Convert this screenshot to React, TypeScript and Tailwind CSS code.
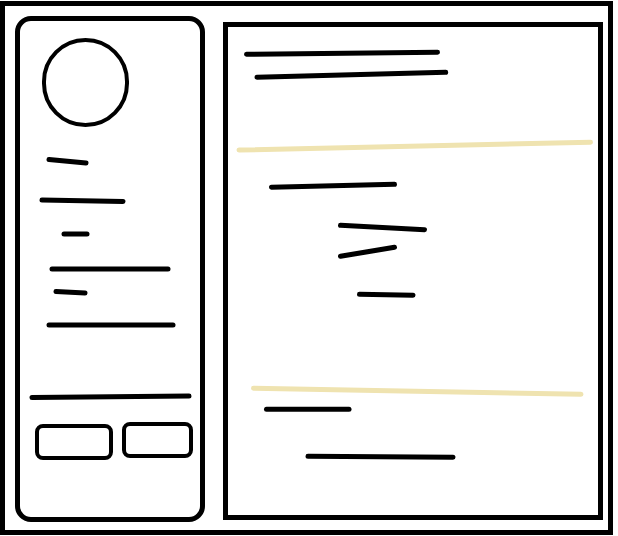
import React from "react";

type Seg = [number, number, number, number];

const leftLines: Seg[] = [
  [29, 138.5, 66, 142],
  [22, 179, 103, 180.5],
  [44, 213, 67, 213],
  [32, 248, 148, 248],
  [36, 270.5, 65, 272],
  [29, 304, 153, 304],
  [12, 376.6, 169, 375],
];

const rightLines: Seg[] = [
  [18.5, 27.3, 209.5, 25.3],
  [29, 50.3, 217.7, 45.3],
  [43.5, 160.3, 166.5, 157.3],
  [112.5, 198.3, 196.5, 202.7],
  [112.5, 229.3, 166.5, 220.3],
  [131.5, 267.3, 185, 268.3],
  [38.5, 382.3, 121, 382.3],
  [80, 429.3, 225, 430.3],
];

const yellowLines: Seg[] = [
  [11, 123, 362.5, 115.3],
  [25.5, 361.3, 353, 367.3],
];

function Strokes({ lines, color, width }: { lines: Seg[]; color: string; width: number }) {
  return (
    <>
      {lines.map(([x1, y1, x2, y2], i) => (
        <line
          key={i}
          x1={x1}
          y1={y1}
          x2={x2}
          y2={y2}
          stroke={color}
          strokeWidth={width}
          strokeLinecap="round"
        />
      ))}
    </>
  );
}

export default function App() {
  return (
    <div className="w-[618px] h-[536px] bg-white overflow-hidden">
      <div className="mt-[1px] w-[613px] h-[534px] border-[5px] border-black flex items-start bg-white">
        {/* Left sidebar card */}
        <div className="relative ml-[10px] mt-[10px] w-[190px] h-[506px] rounded-[16px] border-[5px] border-black flex flex-col">
          <div className="ml-[22px] mt-[17px] w-[87px] h-[89px] rounded-full border-[4px] border-black" />
          <div className="ml-[15px] mt-[295px] flex items-start gap-[9px]">
            <div className="mt-[2px] w-[78px] h-[36px] rounded-[8px] border-[4px] border-black" />
            <div className="w-[71px] h-[36px] rounded-[8px] border-[4px] border-black" />
          </div>
          <svg className="absolute inset-0 pointer-events-none" width="180" height="496" viewBox="0 0 180 496">
            <Strokes lines={leftLines} color="#000" width={5} />
          </svg>
        </div>
        {/* Right main panel */}
        <div className="relative ml-[18px] mt-[16px] w-[380px] h-[498px] border-[5px] border-black">
          <svg className="absolute inset-0 pointer-events-none" width="370" height="488" viewBox="0 0 370 488">
            <Strokes lines={yellowLines} color="#efe3b0" width={5} />
            <Strokes lines={rightLines} color="#000" width={5} />
          </svg>
        </div>
      </div>
    </div>
  );
}
